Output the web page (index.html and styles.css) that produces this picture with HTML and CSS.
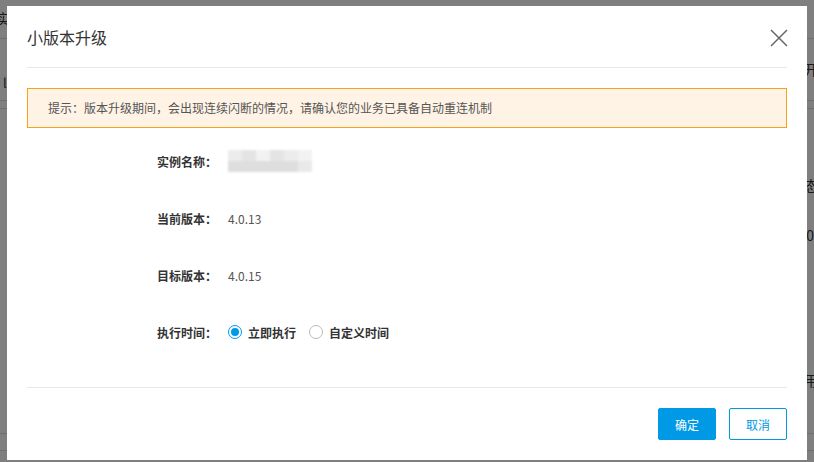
FILE: index.html
```html
<!DOCTYPE html>
<html lang="zh-CN">
<head>
  <meta charset="UTF-8" />
  <title>小版本升级</title>
  <link rel="stylesheet" href="styles.css">
</head>
<body>
  <div class="page">
    <div class="page-row row-top"><span class="page-text">实例列表</span></div>
    <div class="page-row row-head">
      <span class="page-big">i</span>
      <span class="page-small">l</span>
      <span class="page-text right">展开</span>
    </div>
    <div class="page-row row-thin"></div>
    <div class="page-row row-body">
      <span class="page-text right status">状态</span>
      <span class="page-text right zero">0</span>
      <span class="page-text right use">用</span>
    </div>
    <div class="page-row row-foot"></div>
    <div class="page-row row-last"></div>
  </div>

  <div class="mask"></div>

  <div class="modal">
    <div class="modal-header">
      <h2 class="modal-title">小版本升级</h2>
      <span class="modal-close">
        <svg width="18" height="18" viewBox="0 0 18 18">
          <path d="M1 1 L17 17 M17 1 L1 17" stroke="#666" stroke-width="1.5" fill="none" />
        </svg>
      </span>
    </div>

    <div class="alert">提示：版本升级期间，会出现连续闪断的情况，请确认您的业务已具备自动重连机制</div>

    <div class="form">
      <div class="form-row">
        <span class="label">实例名称：</span>
        <span class="masked">
          <i></i><i></i><i></i><i></i><i></i><i></i>
          <i></i><i></i><i></i><i></i><i></i><i></i>
        </span>
      </div>
      <div class="form-row">
        <span class="label">当前版本：</span>
        <span class="value">4.0.13</span>
      </div>
      <div class="form-row">
        <span class="label">目标版本：</span>
        <span class="value">4.0.15</span>
      </div>
      <div class="form-row">
        <span class="label">执行时间：</span>
        <label class="radio checked"><span class="dot"></span>立即执行</label>
        <label class="radio"><span class="dot"></span>自定义时间</label>
      </div>
    </div>

    <div class="modal-footer">
      <button class="btn btn-primary">确定</button>
      <button class="btn btn-default">取消</button>
    </div>
  </div>
</body>
</html>
```

FILE: styles.css
```css
body {
  margin: 0;
  font-family: "Noto Sans CJK SC", "Noto Sans", sans-serif;
  background-color: #fff;
  color: #333;
  overflow: hidden;
}

.page {
  width: 814px;
  height: 462px;
}

.page-row {
  position: relative;
  border-bottom: 1px solid #dcdcdc;
  box-sizing: border-box;
}

.row-top { height: 39px; }
.row-head { height: 62px; }
.row-thin { height: 8px; }
.row-body { height: 325px; }
.row-foot { height: 17px; }
.row-last { height: 10px; border-bottom: none; }

.page-text {
  position: absolute;
  left: -4px;
  top: 8px;
  font-size: 14px;
  color: #333;
}

.page-text.right {
  left: auto;
  right: -4px;
  top: 20px;
}

.page-text.status { top: 66px; }
.page-text.zero { top: 116px; right: 0; }
.page-text.use { top: 261px; }

.page-big {
  position: absolute;
  left: 10px;
  top: 10px;
  font-size: 22px;
  color: #333;
}

.page-small {
  position: absolute;
  left: 3px;
  top: 34px;
  font-size: 13px;
  color: #333;
}

.mask {
  position: fixed;
  top: 0;
  left: 0;
  width: 100%;
  height: 100%;
  background-color: rgba(0, 0, 0, 0.5);
}

.modal {
  position: fixed;
  top: 6px;
  left: 7px;
  width: 800px;
  height: 454px;
  background-color: #fff;
  padding: 0 20px;
  box-sizing: border-box;
  display: flex;
  flex-direction: column;
}

.modal-header {
  height: 62px;
  display: flex;
  align-items: center;
  justify-content: space-between;
  border-bottom: 1px solid #e8e8e8;
  box-sizing: border-box;
}

.modal-title {
  margin: 0;
  font-size: 16px;
  font-weight: normal;
  color: #333;
}

.modal-close {
  display: flex;
  margin-right: -1px;
  margin-top: 2px;
}

.alert {
  margin-top: 20px;
  height: 40px;
  line-height: 38px;
  padding-left: 20px;
  font-size: 12px;
  color: #555;
  background-color: #fff3e6;
  border: 1px solid #f7a21b;
  box-sizing: border-box;
}

.form {
  padding: 23px 0 45px 130px;
  border-bottom: 1px solid #e8e8e8;
  display: flex;
  flex-direction: column;
  gap: 37px;
}

.form-row {
  height: 20px;
  display: flex;
  align-items: center;
  font-size: 12px;
}

.label {
  width: 71px;
  font-weight: bold;
  color: #333;
}

.value {
  color: #555;
}

.masked {
  display: grid;
  grid-template-columns: repeat(6, 14px);
  grid-template-rows: 11px 11px;
  filter: blur(1px);
  border-radius: 0 0 8px 8px;
}

.masked i {
  background-color: #ececec;
}

.masked i:nth-child(2n) { background-color: #e4e4e4; }
.masked i:nth-child(3n) { background-color: #f2f2f2; }
.masked i:nth-child(n+7) { background-color: #dedede; }
.masked i:nth-child(12) { background-color: #e9e9e9; }

.radio {
  display: flex;
  align-items: center;
  margin-right: 13px;
  color: #333;
  font-weight: bold;
}

.radio .dot {
  width: 12px;
  height: 12px;
  border: 1px solid #bbb;
  border-radius: 50%;
  margin-right: 6px;
  position: relative;
}

.radio.checked .dot {
  border-color: #0099e5;
}

.radio.checked .dot::after {
  content: "";
  position: absolute;
  top: 2px;
  left: 2px;
  width: 8px;
  height: 8px;
  border-radius: 50%;
  background-color: #0099e5;
}

.modal-footer {
  display: flex;
  justify-content: flex-end;
  gap: 13px;
  padding-top: 20px;
}

.btn {
  width: 58px;
  height: 32px;
  font-size: 12px;
  font-family: inherit;
  border-radius: 2px;
  cursor: pointer;
}

.btn-primary {
  background-color: #0099e5;
  border: 1px solid #0099e5;
  color: #fff;
}

.btn-default {
  background-color: #fff;
  border: 1px solid #0099e5;
  color: #0099e5;
}
```
